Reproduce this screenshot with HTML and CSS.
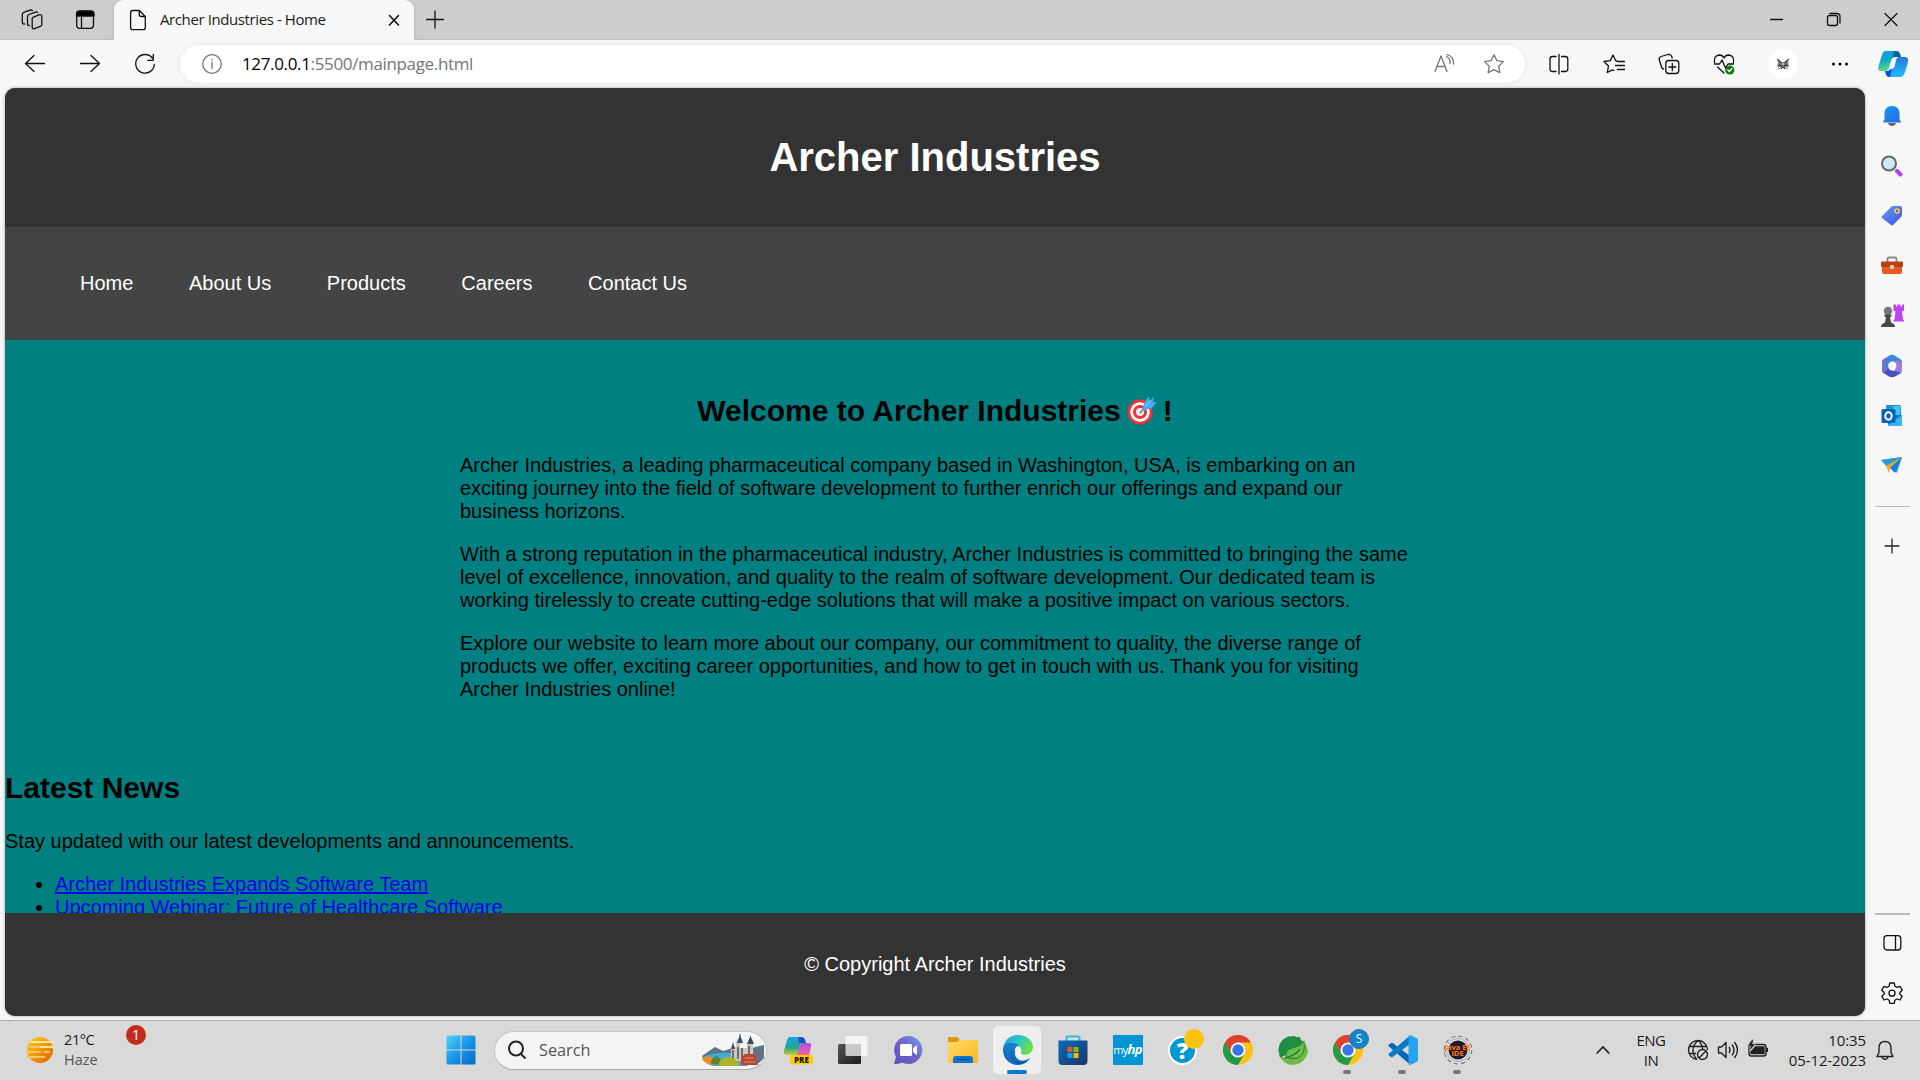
FILE: index.html
```html
<!DOCTYPE html>
<html lang="en">
<head>
<meta charset="utf-8">
<title>Archer Industries - Home</title>
<link rel="stylesheet" href="styles.css">
</head>
<body>
<div class="desktop">
  <div class="tabstrip">
    <span class="slot tab-tool"><svg class="line" width="24" height="24" viewBox="0 0 24 24"><path d="M13 9.3 19 6.8q2.8-.8 2.8 1.5v8.2q0 1.3-1.4 1.8l-6 2.3q-2.2.8-2.2-1.3v-8.500q0-1.100.8-1.500zM9.300 17.500q-1.800.2-1.800-1.500V8.500q0-1.500 1.500-2l6.500-2.400q1.300-.4 2 .4M4.500 16q-2.200.2-2.200-1.500V6.200q0-1.400 1.400-1.900L10 2.200q1.500-.5 2.300.3"/></svg></span>
    <span class="slot tab-tool"><svg class="line" width="24" height="24" viewBox="0 0 24 24"><rect x="3.700" y="3.500" width="16.800" height="16.800" rx="3"/><path d="M3.500 8V6q0-3 3-3h11.500q3 0 3 3v2z" fill="#000"/><path d="M8.500 8v12"/></svg></span>
    <div class="tab">
      <svg class="line" width="24" height="24" viewBox="0 0 24 24"><path d="M6.800 2.500h6.500l6 6v11q0 2.200-2.200 2.200H6.800q-2.200 0-2.200-2.200V4.700q0-2.200 2.200-2.200zM13.300 2.500v4q0 2 2 2h4"/></svg>
      <span class="tab-title">Archer Industries - Home</span>
      <svg class="line bold" width="24" height="24" viewBox="0 0 24 24"><path d="m7.500 7.500 9 9.500m0-9.500-9 9.500"/></svg>
    </div>
    <span class="slot new-tab"><svg class="line" width="24" height="24" viewBox="0 0 24 24"><path d="M3.500 11.500h17M12 3v17"/></svg></span>
    <div class="window-controls">
      <span class="slot"><svg class="line" width="24" height="24" viewBox="0 0 24 24"><path d="M5.500 11.500h12"/></svg></span>
      <span class="slot"><svg class="line" width="24" height="24" viewBox="0 0 24 24"><rect x="5.500" y="7.500" width="10" height="10" rx="2"/><path d="M8 5.500h7q3 0 3 3v6.500"/></svg></span>
      <span class="slot"><svg class="line" width="24" height="24" viewBox="0 0 24 24"><path d="m6 5.500 12 12m0-12-12 12"/></svg></span>
    </div>
  </div>

  <div class="toolbar">
    <span class="slot"><svg class="line" width="24" height="24" viewBox="0 0 24 24"><path d="M21.500 11.500h-19M11 3.500l-8.500 8 8.500 8"/></svg></span>
    <span class="slot"><svg class="line" width="24" height="24" viewBox="0 0 24 24"><path d="M2.500 11.500h19M13 3.500l8.500 8-8.500 8"/></svg></span>
    <span class="slot"><svg class="line" width="24" height="24" viewBox="0 0 24 24"><path d="M21.300 12.500a9.300 9.300 0 1 1-2-6.500M20.300 2.500v5.800h-5.500"/></svg></span>
    <div class="address">
      <svg class="line grey" width="24" height="24" viewBox="0 0 24 24"><circle cx="12" cy="12" r="9.300"/><path d="M12 10.500v6M12 7.500v.500"/></svg>
      <span class="url"><span class="host">127.0.0.1</span>:5500/mainpage.html</span>
      <svg class="line grey read" width="24" height="24" viewBox="0 0 24 24"><path d="M3 19.500 9 4l6 15.500M5 14.500h8M14.500 4.500q4 2 3.500 7M15 2.500q7 2 6.500 9.500" /></svg>
      <svg class="line grey" width="24" height="24" viewBox="0 0 24 24"><path d="m12 2.800 2.900 5.900 6.500.9-4.700 4.600 1.100 6.500-5.800-3-5.800 3 1.100-6.500-4.700-4.600 6.500-.9z"/></svg>
    </div>
    <div class="tools">
      <span class="slot"><svg class="line" width="24" height="24" viewBox="0 0 24 24"><path d="M9 4.500H5.500q-2.500 0-2.500 2.500v10q0 2.500 2.500 2.500H9M14.500 4.500H18q2.800 0 2.800 2.500v10q0 2.500-2.800 2.500h-3.500M12 2.500v19.500"/></svg></span>
      <span class="slot"><svg class="line" width="24" height="24" viewBox="0 0 24 24"><path d="m15 9-1.500-.4L11 3 8.300 8.600l-6.300.9 4.500 4.500-1.200 6.500 5.200-2.700 1.500.7M15.500 9.500h7M13.500 13.500h9M15.500 17.500h7"/></svg></span>
      <span class="slot"><svg class="line" width="24" height="24" viewBox="0 0 24 24"><rect x="8.800" y="8.500" width="13" height="13" rx="3"/><path d="M15.300 11.500v7M11.800 15h7M6.500 17q-1.500-.3-2-2L2.300 8Q1.500 5.500 4 4.500l7-2q2.700-.7 3.700 2l.5 1.500"/></svg></span>
      <span class="slot"><svg class="line" width="24" height="24" viewBox="0 0 24 24"><path d="M2.500 10.500Q1.500 3.500 7.500 3q3 0 4.500 3 1.500-3 4.500-3 6 .5 5 7.500M2.500 12h5l2.500-4 3.500 8 2.500-4h5.500M5.500 15l6.500 6"/><circle cx="17.800" cy="18" r="4.600" fill="#107c10" stroke="none"/><path d="m15.800 18 1.500 1.500 2.700-2.700" stroke="#fff"/></svg></span>
      <span class="slot avatar-slot"><span class="avatar"><svg width="14" height="14" viewBox="0 0 14 14"><path d="M1 1.500 5.500 5h3L13 1.500 12 6l1 3-2 2 1 2-3-2H5l-3 2 1-2-2-2 1-3z" fill="#777"/><path d="m1.500 2 4 4M12.500 2l-4 4M3 8l3 1M11 8 8 9M5 12l2-2 2 2" stroke="#222" fill="none"/><path d="m3 10 1.500.500M9.500 10.500 11 10M6 7h2" stroke="#fff"/></svg></span></span>
      <span class="slot more"><svg width="24" height="24" viewBox="0 0 24 24"><circle cx="5.500" cy="12" r="1.500"/><circle cx="12" cy="12" r="1.500"/><circle cx="18.500" cy="12" r="1.500"/></svg></span>
      <span class="slot"><svg width="32" height="32" viewBox="0 0 32 32"><defs><linearGradient id="ca" x1="0" y1="0" x2=".3" y2="1"><stop stop-color="#129fe0"/><stop offset=".5" stop-color="#10a7c8"/><stop offset="1" stop-color="#61df86"/></linearGradient><linearGradient id="cb" x1="0" y1="0" x2="0" y2="1"><stop stop-color="#2878dd"/><stop offset="1" stop-color="#1dbdff"/></linearGradient></defs><path d="M9 3h10q3 0 4 3l1 3h-6q-3 0-4 4l-2 7q-1 3-4 3H4q-4 0-2.500-5L5 7q1-4 4-4z" fill="url(#ca)"/><path d="M17 3h2q3 0 4 3l1 3h-6q-2 0-2.500 1z" fill="#07639b"/><path d="M22 9h6q4 0 3 5l-3 10q-1.500 5-5 5H12q-3 0-3-3l-1-3q3 1 5-2h1q3 0 4-4l1-5q1-3 3-3z" fill="url(#cb)"/><path d="M8 23q4 1 7-2l-2 8q-3 0-4-3z" fill="#1747d4"/></svg></span>
    </div>
  </div>

  <div class="middle">
    <main class="page">
      <header class="site-header"><h1>Archer Industries</h1></header>
      <nav class="site-nav">
        <a>Home</a><a>About Us</a><a>Products</a><a>Careers</a><a>Contact Us</a>
      </nav>
      <div class="content">
        <section class="welcome">
          <h2>Welcome to Archer Industries<svg class="dart" width="37" height="32" viewBox="0 0 37 32"><circle cx="18" cy="18" r="12.500" fill="#f92f36"/><circle cx="18" cy="18" r="9.800" fill="#fff"/><circle cx="18" cy="18" r="7" fill="#f92f36"/><circle cx="18" cy="18" r="4" fill="#eee"/><path d="m18 19 9-10" stroke="#2183c5" stroke-width="1.500"/><path d="m20 17 2-8 5-7 .5 5L32 3l-1 5 4 0-5 6z" fill="#45a9f5"/><path d="m23 13 6-7" stroke="#a2d6fa"/></svg>!</h2>
          <p>Archer Industries, a leading pharmaceutical company based in Washington, USA, is embarking on an exciting journey into the field of software development to further enrich our offerings and expand our business horizons.</p>
          <p>With a strong reputation in the pharmaceutical industry, Archer Industries is committed to bringing the same level of excellence, innovation, and quality to the realm of software development. Our dedicated team is working tirelessly to create cutting-edge solutions that will make a positive impact on various sectors.</p>
          <p>Explore our website to learn more about our company, our commitment to quality, the diverse range of products we offer, exciting career opportunities, and how to get in touch with us. Thank you for visiting Archer Industries online!</p>
        </section>
        <section class="news">
          <h2>Latest News</h2>
          <p>Stay updated with our latest developments and announcements.</p>
          <ul>
            <li><a href="#">Archer Industries Expands Software Team</a></li>
            <li><a href="#">Upcoming Webinar: Future of Healthcare Software</a></li>
          </ul>
        </section>
      </div>
      <footer class="site-footer">© Copyright Archer Industries</footer>
    </main>

    <aside class="sidebar">
      <span class="side-slot"><svg width="24" height="24" viewBox="0 0 24 24"><defs><linearGradient id="be" x1="0" y1="0" x2="1" y2="1"><stop stop-color="#1798e8"/><stop offset="1" stop-color="#2a65ed"/></linearGradient></defs><path d="M8 19h8q-1 3-4 3t-4-3z" fill="#666"/><path d="M12 2q-7.500 0-7.500 8v5L3 18.500h18L19.500 15v-5q0-8-7.500-8z" fill="url(#be)"/></svg></span>
      <span class="side-slot"><svg width="24" height="24" viewBox="0 0 24 24"><path d="m15.500 15.500 5 5" stroke="#aaa" stroke-width="2"/><path d="m17 17 3.500 3.500" stroke="#b13df5" stroke-width="4" stroke-linecap="round"/><circle cx="9" cy="9.500" r="7" fill="#cbeafb" stroke="#666" stroke-width="2"/></svg></span>
      <span class="side-slot"><svg width="24" height="24" viewBox="0 0 24 24"><defs><linearGradient id="tg" x1="0" y1="0" x2="1" y2="1"><stop stop-color="#65a0ff"/><stop offset="1" stop-color="#404dde"/></linearGradient></defs><path d="M13 2h7q2 0 2 2v7q0 1-1 2l-8 8q-1 1-2 0L2 14q-1-1 0-2l9-9q1-1 2-1z" fill="url(#tg)"/><circle cx="17" cy="7" r="2" fill="#5b60bd" stroke="#ffd23d" stroke-width="1.500"/></svg></span>
      <span class="side-slot"><svg width="24" height="24" viewBox="0 0 24 24"><path d="M7.500 8V5q0-1.500 1.500-1.500h6q1.500 0 1.500 1.500v3" fill="none" stroke="#888" stroke-width="1.800"/><path d="M2 12h20v6q0 2-2 2H4q-2 0-2-2z" fill="#e75b20"/><path d="M2 7.500h20q1 0 1 1V12q0 1-2 1H3q-2 0-2-1V8.500q0-1 1-1z" fill="#b9410d"/><circle cx="12" cy="13" r="2.200" fill="#ccc"/></svg></span>
      <span class="side-slot"><svg width="24" height="24" viewBox="0 0 24 24"><path d="M13.500.5h2.500v2h1.500v-2h3v2H22v-2h2v6l-2 1 1 8 1.500 2H13l1.500-2 1-8-2-1z" fill="#bb45f4"/><circle cx="8" cy="7" r="4.200" fill="#777"/><path d="M4.500 10.500h7v2l-1.500.5 1 5.500q4 1 4 4.500H1q0-3.500 4-4.500l1-5.500-1.500-.5z" fill="#484848"/></svg></span>
      <span class="side-slot"><svg width="24" height="24" viewBox="0 0 24 24"><path d="M2 7.500q0-1.500 1.300-2.300L9 1.800V15l2 1.500-7 3L3 19q-1-.600-1-2z" fill="#8a66d2"/><path d="M9 1.800q3-2 6 0l5.500 3.400Q22 6 22 7.500v3L15 7l-3 .5-4 4L5 16l-1-8z" fill="#3f87dc"/><path d="M22 7.500V17q0 1.500-1.500 2.300L15 22v-9l1-1-3-5z" fill="#a27bd4"/><path d="M3 18.500q4-1 5-5 2 4 6 3l7 2.500-5.500 3.300q-3.500 2-7 0z" fill="#454fbe"/><circle cx="12.300" cy="11.800" r="4.100" fill="#f7f7f7"/></svg></span>
      <span class="side-slot"><svg width="24" height="24" viewBox="0 0 24 24"><path d="M6 1h13q2 0 2 2v18H8z" fill="#1497df"/><path d="M13 2h7v9h-7z" fill="#45c5f6"/><path d="M8 11h14v11H8z" fill="#1673cb"/><path d="m8 21 14-10v11H8z" fill="#35b8f1"/><rect x="1.500" y="5" width="14" height="14" rx="1.500" fill="#0a62b4"/><ellipse cx="8.500" cy="12" rx="3.200" ry="3.800" fill="none" stroke="#fff" stroke-width="2"/></svg></span>
      <span class="side-slot"><svg width="24" height="24" viewBox="0 0 24 24"><path d="m1 6 21-3-5 16-7-6z" fill="#37a6ed"/><path d="M1 6 22 3 6 12z" fill="#289bd7"/><path d="m6 12 16-9L10 14l-1 5z" fill="#f3a61d"/><path d="m10 14 12-11-7 16z" fill="#147de0"/></svg></span>
      <i class="rule"></i>
      <span class="side-slot add"><svg width="24" height="24" viewBox="0 0 24 24" fill="none" stroke="#222" stroke-width="1.300"><path d="M4.500 12h15M12 4.500v15"/></svg></span>
      <i class="rule low"></i>
      <span class="side-slot"><svg class="line" width="24" height="24" viewBox="0 0 24 24"><rect x="4" y="4.700" width="16.800" height="14.300" rx="3"/><path d="M15.500 5v14"/></svg></span>
      <span class="side-slot"><svg class="line" width="24" height="24" viewBox="0 0 24 24"><path d="m9.800 2-.7 3.200-2 1.200L4 5.400 1.800 9.200l2.400 2.200v1.600l-2.400 2.200L4 19l3.100-1 2 1.200.7 3.200h4.400l.7-3.200 2-1.200 3.100 1 2.200-3.800-2.400-2.200v-1.600l2.400-2.200L20 5.400l-3.100 1-2-1.200-.7-3.200z"/><circle cx="12" cy="12.200" r="3"/></svg></span>
    </aside>
  </div>

  <div class="taskbar">
    <div class="weather">
      <svg width="30" height="28" viewBox="0 0 30 28"><defs><linearGradient id="su" x1="0" y1="0" x2="1" y2="1"><stop stop-color="#ffd000"/><stop offset="1" stop-color="#e35f06"/></linearGradient></defs><circle cx="15" cy="14" r="13" fill="url(#su)"/><g stroke-width="2.200" stroke-linecap="round"><path d="M6 6h22M14 11h13" stroke="#fbe3a0"/><path d="M5 11h9M2 16h13M20 16h4M2 21h17" stroke="#efc475"/></g></svg>
      <div class="weather-text"><span class="temp">21°C</span><span class="sky">Haze</span></div>
      <span class="badge">1</span>
    </div>
    <svg class="start" width="30" height="30" viewBox="0 0 30 30"><defs><linearGradient id="wi" x1="0" y1="0" x2="1" y2="1"><stop stop-color="#4fd3ff"/><stop offset=".5" stop-color="#1795e6"/><stop offset="1" stop-color="#0669cb"/></linearGradient></defs><path d="M2 .5h12.500v14H.5V2Q.5.500 2 .5zM15.500.5H28q1.500 0 1.500 1.500v12.500h-14zM.5 15.500h14v14H2q-1.500 0-1.500-1.500zM15.500 15.500h14V28q0 1.500-1.500 1.500H15.500z" fill="url(#wi)"/></svg>
    <div class="search">
      <svg width="20" height="20" viewBox="0 0 20 20" fill="none" stroke="#222" stroke-width="2"><circle cx="9" cy="8.500" r="7"/><path d="m13.500 13.500 5 5"/></svg>
      <span class="search-label">Search</span>
      <svg class="castle" width="64" height="34" viewBox="0 0 64 34"><path d="M1 23 8 18l6-4 8 4 10-3 14 4 8-5 9-2v12q-4 8-14 8H12Q3 31 1 23z" fill="#567989"/><path d="M2 24q12-5 30-4l22 5-8 8H12Q4 31 2 24z" fill="#47a9d7"/><path d="M30 14h5V9l2-4 2 4v6h7v-4l3-6 3 6v17H30z" fill="#cfc8bf"/><path d="m36 10 3-8 3 8zM46 11l3.500-8 3.500 8zM30 16l2-7 2 7z" fill="#354e67"/><path d="M39 1v8M49.500 3v6" stroke="#354e67"/><path d="M32 17v8m5-11v12m4-11v10m7-12v12" stroke="#6b6b78" stroke-width="2"/><path d="m40 24 4-3h11l2 11H40z" fill="#b94635"/><path d="M44 25h9m-10 4h12" stroke="#e58a67"/><path d="m54 17 9-2v10l-7 6z" fill="#65717c"/><path d="M1 26q5-5 10-1l5 7h-5Q4 31 1 26z" fill="#ee8a23"/><path d="M10 31q0-7 6-8 5 4 4 9z" fill="#55862f"/><path d="M17 33q2-10 12-9 9 2 9 9z" fill="#a9b52c"/></svg>
    </div>
    <div class="apps">
      <span class="app"><svg width="30" height="30" viewBox="0 0 30 30"><defs><linearGradient id="pa" x1="0" y1="0" x2="0" y2="1"><stop stop-color="#1ba2e8"/><stop offset=".6" stop-color="#24a68c"/><stop offset="1" stop-color="#d2cb31"/></linearGradient><linearGradient id="pb" x1="0" y1="0" x2="0" y2="1"><stop stop-color="#b04ce5"/><stop offset="1" stop-color="#f26a8b"/></linearGradient></defs><path d="M7 2h12q2 0 3 3l1 3h-5l-3 9q-1 3-3 3H4q-4 0-3-4L4 5q1-3 3-3z" fill="url(#pa)"/><path d="M15 2h4q2 0 3 3l1 3h-7z" fill="#1657c7"/><path d="M18 8h8q3 0 2 4l-2 9H13z" fill="url(#pb)"/><rect x="7" y="20" width="23" height="9.500" rx="2.500" fill="#ffca0a"/></svg><span class="pre">PRE</span></span>
      <span class="app"><svg width="30" height="30" viewBox="0 0 30 30"><defs><linearGradient id="bk" x1="0" y1="0" x2="1" y2="1"><stop stop-color="#555"/><stop offset="1" stop-color="#1b1b1b"/></linearGradient></defs><rect x="0" y="9" width="23" height="20" rx="1.500" fill="url(#bk)"/><rect x="7.500" y="1" width="22" height="20" rx="1.500" fill="#fff" opacity=".72"/></svg></span>
      <span class="app"><svg width="30" height="30" viewBox="0 0 30 30"><defs><linearGradient id="ch" x1="0" y1="1" x2="1" y2="0"><stop stop-color="#5550c6"/><stop offset=".5" stop-color="#6f63c4"/><stop offset="1" stop-color="#6fa2ee"/></linearGradient></defs><path d="M15 1a14 14 0 1 1-6 26.500q-4 2-8 1.500l2-7A14 14 0 0 1 15 1z" fill="url(#ch)"/><rect x="7" y="9" width="12" height="12" rx="1.500" fill="#fff"/><path d="m20 13 4-3v10l-4-3z" fill="#fff"/></svg></span>
      <span class="app"><svg width="30" height="30" viewBox="0 0 30 30"><defs><linearGradient id="fo" x1="0" y1="0" x2="1" y2="1"><stop stop-color="#ffdb6b"/><stop offset="1" stop-color="#fab81b"/></linearGradient></defs><path d="M0 3q0-1 1-1h8l3 3-3 5H0z" fill="#dc9a05"/><path d="M0 7h9l3-2h18v22q0 1-1 1H1q-1 0-1-1z" fill="url(#fo)"/><path d="M5 28v-4q0-3 3-3h14q3 0 3 3v4z" fill="#0e75cf"/><path d="M9 24.500h12" stroke="#063e78"/></svg></span>
      <span class="app active"><svg width="30" height="30" viewBox="0 0 30 30"><defs><linearGradient id="ed" x1="0" y1="0" x2="1" y2=".4"><stop stop-color="#219bd8"/><stop offset=".5" stop-color="#2ac5cf"/><stop offset="1" stop-color="#6adf4a"/></linearGradient><linearGradient id="ee" x1="0" y1="0" x2="0" y2="1"><stop stop-color="#1581cf"/><stop offset="1" stop-color="#1267be"/></linearGradient></defs><path d="M0 14C1 5 7 0 15 0c9 0 15 6 15 12 0 5-4 8-8 8-3 0-5-1-4-3 2-4-1-6-5-7Q5 7 0 14z" fill="url(#ed)"/><path d="M0 15C0 9 6 7 11 8q7 2 8 8-1-3-4-3-5 4-2 9 5 7 14 1-4 7-12 7C6 30 0 23 0 15z" fill="url(#ee)"/><path d="M11 14q-5 7 1 12 6 4 14-1l2-3q-4 7-12 7-7-2-8-8 0-5 3-7z" fill="#10509d"/><path d="M15 11q4 1 3 6-1 3 6 3-3 2-7 1-6-3-5-7 1-3 3-3z" fill="#f3f3f3"/></svg></span>
      <span class="app"><svg width="30" height="30" viewBox="0 0 30 30"><defs><linearGradient id="st" x1="0" y1="0" x2="1" y2="1"><stop stop-color="#0a6bbb"/><stop offset="1" stop-color="#1b3567"/></linearGradient></defs><path d="M8.500 7V3q0-1.500 1.500-1.500h10q1.500 0 1.500 1.500v4" fill="none" stroke="#30b9ed" stroke-width="2"/><path d="M.5 5.500h29V26q0 4-4 4h-21q-4 0-4-4z" fill="url(#st)"/><path d="M9.500 12h5v5h-5z" fill="#f35325"/><path d="M15.500 12h5v5h-5z" fill="#81bc06"/><path d="M9.500 18h5v5h-5z" fill="#05a6f0"/><path d="M15.500 18h5v5h-5z" fill="#ffba08"/></svg></span>
      <span class="app"><span class="hp">my<b>hp</b></span></span>
      <span class="app"><span class="help">?</span><i class="dot"></i></span>
      <span class="app"><svg width="30" height="30" viewBox="0 0 30 30"><g id="chrome"><circle cx="15" cy="15" r="15" fill="#fbc116"/><path d="M2 7.500A15 15 0 0 1 28 7.500H15L8.500 18.700z" fill="#df4130"/><path d="M2 7.500 8.500 18.700 21.500 18.700 15 30A15 15 0 0 1 2 7.500z" fill="#229a4a"/><circle cx="15" cy="15" r="7.500" fill="#fff"/><circle cx="15" cy="15" r="5.700" fill="#3676e8"/></g></svg></span>
      <span class="app"><svg width="30" height="30" viewBox="0 0 30 30"><path d="M3 22A13 13 0 1 1 25 7l-7 9z" fill="#218c43"/><path d="M3.500 22A13.300 13.300 0 0 1 23 5" fill="none" stroke="#218c43" stroke-width="3" stroke-dasharray="3 2.200"/><path d="M2 22q8 1 17-2 9-4 8-12 5 8 1 14-5 8-14 8-8-1-12-8z" fill="#70b944"/><path d="M26 6q2 13-6 17-7 2-12-1-1-7 6-9 8-1 12-7z" fill="#6ec04a" stroke="#237e36"/><path d="M7 23q10-2 15-9" fill="none" stroke="#237e36" stroke-width="1.300"/></svg></span>
      <span class="app running"><svg width="30" height="30" viewBox="0 0 30 30"><use href="#chrome"/></svg><span class="profile">S</span></span>
      <span class="app running"><svg width="30" height="30" viewBox="0 0 30 30"><path d="M1 9.500 3 8q1-.5 2 .2L22 21v8.500L1 11.500q-1-1 0-2z" fill="#0667b7"/><path d="M1 20.500 3 22q1 .5 2-.2L22 9V.5L1 18.500q-1 1 0 2z" fill="#087cc9"/><path d="m22 0 6.500 3q1.500.7 1.500 2.300v19.400q0 1.600-1.500 2.300L22 30q-1.500 0-1.500-2V2Q20.500 0 22 0z" fill="#26a4f2"/></svg></span>
      <span class="app running"><svg width="30" height="30" viewBox="0 0 30 30"><circle cx="15" cy="15" r="12.600" fill="#ddd" stroke="#555" stroke-width="3.400" stroke-dasharray="3.600 3"/><circle cx="15" cy="15" r="12.600" fill="#e2e2e2" stroke="#e2e2e2" stroke-width="1.800" stroke-dasharray="3.600 3"/><circle cx="15" cy="15" r="11.500" fill="none" stroke="#888" stroke-width=".7"/><circle cx="15" cy="15" r="9.500" fill="#211a30"/></svg><span class="java">Java EE<br>IDE</span></span>
    </div>
    <div class="tray">
      <svg class="chevron" width="14" height="10" viewBox="0 0 14 10" fill="none" stroke="#222" stroke-width="1.700"><path d="M.7 8.500 7 2l6.300 6.500"/></svg>
      <div class="lang"><span>ENG</span><span>IN</span></div>
      <svg class="tray-icon" width="24" height="24" viewBox="0 0 24 24"><path d="M11 21.500A9.500 9.500 0 1 1 21.500 12M10.500 21Q7 17 7 12t5-9.500q4 3 4.700 8.500M3 8.500h18M3 15.500h7"/><circle cx="16.500" cy="16.500" r="5"/><path d="m13 20 7-7"/></svg>
      <svg class="tray-icon" width="24" height="24" viewBox="0 0 24 24"><path d="M2.500 9h3L10 4.500v15L5.500 15h-3zM13 9q2 3 0 6M16 6.500q4 5.500 0 11M18.500 4q6 8 0 16"/></svg>
      <svg class="tray-icon" width="24" height="24" viewBox="0 0 24 24"><rect x="3" y="6.500" width="17" height="11.500" rx="2.500"/><path d="M9.500 9H18v6.500H5V14z" fill="#222"/><path d="M21 10v4" stroke-width="2"/><path d="M6 1.500 1.500 8h3l-1 5 6-7H6.500l1-4.500z" fill="#222" stroke="#d9d9d9" stroke-width=".5"/></svg>
      <div class="clock"><span>10:35</span><span>05-12-2023</span></div>
      <svg class="tray-icon" width="24" height="24" viewBox="0 0 24 24"><path d="M12 3.500q-6 0-6 6.500v4.500L4 18.500h16l-2-4V10q0-6.500-6-6.500zM9 18.500q.5 2.800 3 2.800t3-2.800"/></svg>
    </div>
  </div>
</div>
</body>
</html>
```
FILE: styles.css
```css
* { box-sizing: border-box; }
html, body { margin: 0; height: 100%; overflow: hidden; }
body { font-family: "Open Sans", "Noto Sans", sans-serif; color: #1b1b1b; }
svg { display: block; flex: none; }
.desktop { display: grid; grid-template-rows: 40px 48px 932px 60px; width: 1920px; height: 1080px; background: #f7f7f7; }
.line { fill: none; stroke: #111; stroke-width: 1.3; stroke-linecap: round; stroke-linejoin: round; }
.bold { stroke-width: 1.6; }
.grey { stroke: #767676; }
.slot { display: flex; align-items: center; justify-content: center; flex: none; width: 55px; height: 100%; }

/* Tab strip */
.tabstrip { display: flex; background: #cdcdcd; border-bottom: 1px solid #bebebe; padding-left: 6px; }
.tab-tool { width: 52.5px; }
.tab { display: flex; align-items: center; width: 300px; height: 40px; margin-left: 3px; padding: 0 8px 0 12px; background: #f7f7f7; border-radius: 9px 9px 0 0; box-shadow: 0 0 3px #aaa; }
.tab-title { flex: 1; padding: 0 0 2px 10px; font-size: 15px; letter-spacing: -.4px; white-space: nowrap; }
.new-tab { width: 42px; }
.window-controls { display: flex; margin-left: auto; padding-right: 1px; }
.window-controls .slot { width: 57px; }

/* Toolbar */
.toolbar { display: flex; align-items: center; padding-left: 7px; background: #f7f7f7; }
.address { display: flex; align-items: center; width: 1345px; height: 38px; margin-left: 8px; padding: 0 19px 0 20px; background: #fff; border-radius: 19px; box-shadow: 0 0 4px #e3e3e3; }
.url { flex: 1; padding: 0 0 2px 18px; font-size: 17px; letter-spacing: -.35px; color: #767676; }
.host { color: #000; }
.read { margin-right: 26px; }
.tools { display: flex; align-items: center; height: 100%; margin-left: 6px; }
.avatar-slot { width: 63px; }
.avatar { display: grid; place-items: center; width: 30px; height: 30px; border-radius: 50%; background: #fff; }
.more { width: 51px; }

/* Web page */
.middle { display: flex; padding-left: 5px; }
.page { display: flex; flex-direction: column; width: 1860px; height: 928px; overflow: hidden; border-radius: 10px; background: #008080; color: #000; font: 20px/23px "Liberation Sans", Arial, sans-serif; box-shadow: 0 0 3px #999; }
.site-header { flex: none; display: grid; justify-items: center; height: 139px; padding-top: 46px; background: #333; color: #fff; }
.site-header h1 { margin: 0; font-size: 40px; line-height: 46px; }
.site-nav { flex: none; display: flex; align-items: center; gap: 55.6px; height: 113px; padding-left: 75px; background: #444; color: #fff; }
.content { flex: 1; min-height: 0; overflow: hidden; }
.page h2 { margin: 0 0 25px; font-size: 30px; line-height: 34px; }
.page p { margin: 0 0 20px; }
.welcome { width: 1000px; margin: 0 auto; padding: 54px 25px 0; }
.page .welcome h2 { display: flex; justify-content: center; margin-bottom: 26px; }
.welcome .dart { margin: 0 4px 0 1px; }
.news { padding-top: 50px; }
.news ul { margin: 0; padding-left: 50px; }
.news a { color: #00e; text-decoration: underline; }
.site-footer { flex: none; display: grid; place-items: center; height: 103px; background: #333; color: #fff; }

/* Sidebar */
.sidebar { display: flex; flex-direction: column; align-items: center; width: 55px; height: 932px; padding: 3px 0 2px; }
.side-slot { flex: none; display: grid; place-items: center; width: 54px; height: 50px; padding-right: 1px; }
.rule { flex: none; width: 35px; height: 1px; margin-top: 15px; background: #bbb; }
.add { margin-top: 14px; }
.low { height: 2px; margin-top: auto; margin-bottom: 3px; }

/* Taskbar */
.taskbar { display: flex; align-items: center; background: #d9d9d9; border-top: 1px solid #adadad; padding-bottom: 1px; }
.weather { display: flex; align-items: center; width: 446px; padding-left: 25px; }
.weather-text { display: flex; flex-direction: column; width: 61px; margin: -1px 0 0 9px; font-size: 14.5px; line-height: 20px; letter-spacing: -.4px; }
.sky { color: #555; letter-spacing: 0; }
.badge { width: 20px; height: 20px; margin: -30px 0 0 1px; border-radius: 50%; background: #c42b1c; color: #fff; font-size: 14px; line-height: 20px; text-align: center; }
.search { display: flex; align-items: center; width: 273px; height: 39px; margin-left: 18px; padding: 0 1px 0 12px; border: 1px solid #c5c5c5; border-bottom-color: #aaa; border-radius: 20px; background: #f4f4f4; }
.search-label { flex: 1; padding-left: 12px; font-size: 16.3px; color: #555; }
.apps { display: flex; margin-left: 3px; height: 100%; align-items: center; }
.app { position: relative; display: grid; place-items: center; width: 55px; height: 48px; }
.pre { position: absolute; left: 20px; bottom: 9px; width: 23px; font-size: 8px; font-weight: 800; line-height: 10px; text-align: center; }
.active::before { content: ""; position: absolute; inset: 0 4px 0 3px; border-radius: 5px; background: #eee; }
.active svg { position: relative; }
.active::after, .running::after { content: ""; position: absolute; bottom: 0; left: 17px; width: 20px; height: 4px; border-radius: 2px; background: #0b78d0; }
.running::after { left: 23px; width: 8px; background: #777; }
.hp { width: 30px; height: 30px; background: #0096d6; color: #fff; font-size: 11px; line-height: 28px; letter-spacing: -.7px; text-align: center; }
.hp b { font-style: italic; font-size: 13px; }
.help { width: 29px; height: 29px; border: 2px solid #fff; border-radius: 50%; background: #0096d6; color: #fff; font-size: 23px; font-weight: 800; line-height: 25px; text-align: center; }
.dot { position: absolute; left: 29px; top: 3px; width: 20px; height: 20px; border-radius: 50%; background: #ffc20e; }
.profile { position: absolute; left: 29px; top: 3px; width: 20px; height: 20px; border: 1px solid #496d83; border-radius: 50%; background: #0c85d0; color: #fff; font-size: 12px; line-height: 18px; text-align: center; }
.java { position: absolute; left: 10px; top: 18px; width: 35px; font-size: 7.5px; font-weight: 700; line-height: 6px; color: #ff7a10; text-align: center; }
.tray { display: flex; align-items: center; margin-left: auto; padding-right: 23px; font-size: 15px; line-height: 20px; letter-spacing: -.1px; }
.lang, .clock { display: flex; flex-direction: column; margin-top: -1px; }
.lang { width: 44px; margin-left: 19px; align-items: center; letter-spacing: -.5px; }
.clock { width: 90px; margin-right: 7px; align-items: flex-end; }
.tray-icon { margin-right: 6px; fill: none; stroke: #222; stroke-width: 1.4; stroke-linejoin: round; }
.tray-icon:nth-of-type(2) { margin-left: 13px; }
.tray-icon:last-child { margin-right: 0; }
```
